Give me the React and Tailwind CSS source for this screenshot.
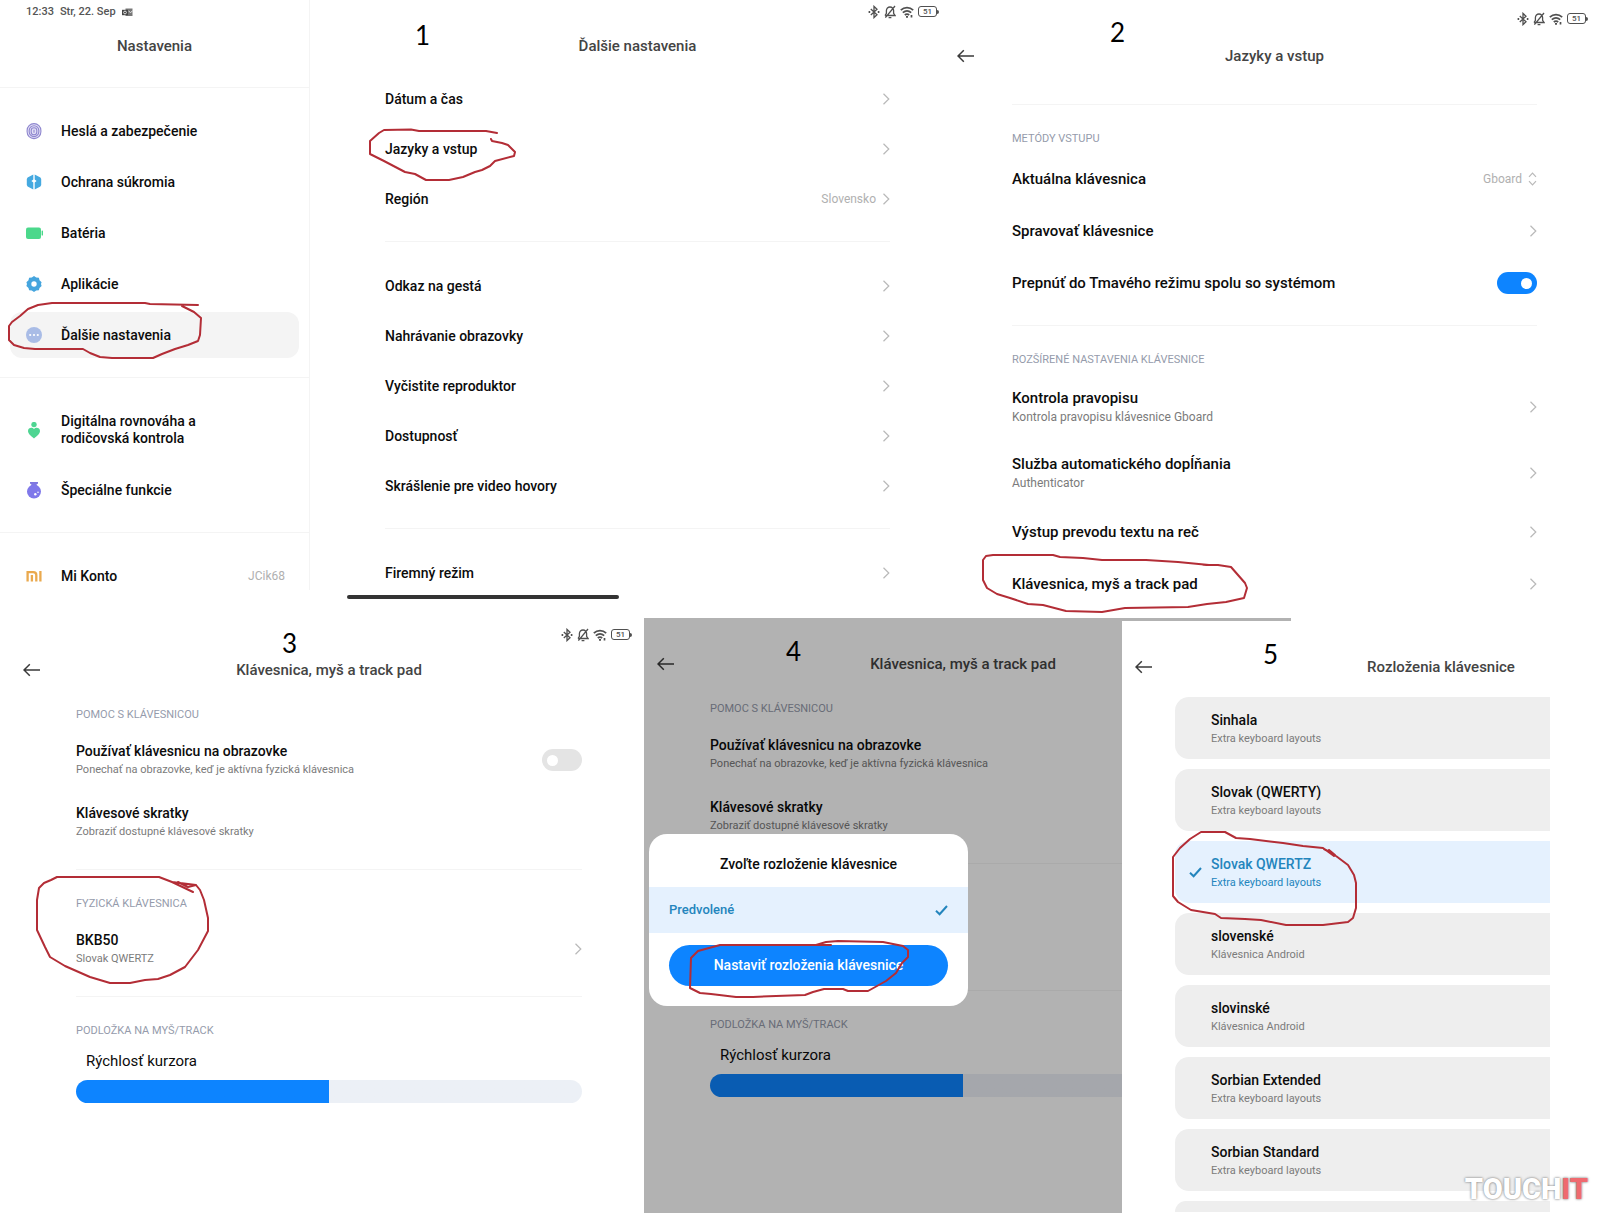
import { useId } from "react";

/* ---------- icons ---------- */

function Chevron() {
  return (
    <svg viewBox="0 0 8 12" className="h-3 w-2 shrink-0" fill="none" stroke="#b9b9b9" strokeWidth="1.2" aria-hidden="true">
      <path d="M1.5 0.8 6.8 6 1.5 11.2" />
    </svg>
  );
}

function UpDown() {
  return (
    <svg viewBox="0 0 9 14" className="h-3.5 w-[9px] shrink-0" fill="none" stroke="#b9b9b9" strokeWidth="1.2" aria-hidden="true">
      <path d="M1 4.8 4.5 1.2 8 4.8M1 9.2 4.5 12.8 8 9.2" />
    </svg>
  );
}

function Check() {
  return (
    <svg viewBox="0 0 13 11" className="h-[11px] w-[13px] shrink-0" fill="none" stroke="#2385bd" strokeWidth="2" aria-hidden="true">
      <path d="M1 5.8 4.6 9.2 12 1" />
    </svg>
  );
}

function Back() {
  return (
    <button type="button" aria-label="Späť" className="flex items-center">
      <svg viewBox="0 0 17 14" className="h-3.5 w-[17px]" fill="none" stroke="#3a3a3a" strokeWidth="1.5" aria-hidden="true">
        <path d="M17 7H1M6.8 1.2 1 7l5.8 5.8" />
      </svg>
    </button>
  );
}

function StatusIcons() {
  return (
    <div className="flex items-center gap-1 text-[#505050]">
      <svg viewBox="0 0 12 14" className="h-3.5 w-3" fill="none" stroke="currentColor" strokeWidth="1.3" aria-hidden="true">
        <path d="M2.8 4 9 9.8 6 12.6V1.4L9 4.2 2.8 10" />
        <path d="M0.6 7h1.6M9.8 7h1.6" strokeWidth="1.8" />
      </svg>
      <svg viewBox="0 0 12 14" className="h-3.5 w-3" fill="none" stroke="currentColor" strokeWidth="1.3" aria-hidden="true">
        <path d="M1 10.5h10L9.6 8.4V5.6C9.6 3.4 8 2 6 2S2.4 3.4 2.4 5.6v2.8L1 10.5M4.6 12.6h2.8M11 1 1.4 12.6" />
      </svg>
      <svg viewBox="0 0 14 12" className="h-3 w-3.5" fill="none" stroke="currentColor" strokeWidth="1.7" aria-hidden="true">
        <path d="M0.8 4.2C4.4 0.8 9.6 0.8 13.2 4.2M2.8 6.7c2.5-2.2 5.9-2.2 8.4 0M4.8 9c1.4-1.2 3-1.2 4.4 0" />
        <path d="M6 10.8h2M11.500 9v2.600" />
      </svg>
      <span className="flex items-center">
        <span className="flex h-[11px] w-[19px] items-center justify-center rounded-[3px] border border-current text-[8px] leading-none font-medium">51</span>
        <span className="h-1 w-0.5 rounded-r-sm bg-current" />
      </span>
    </div>
  );
}

const navIcons = {
  fingerprint: (
    <g fill="none" stroke="#8f87cf" strokeWidth="1.1">
      <rect x="1.1" y="0.6" width="13.8" height="15" rx="6.8" fill="#e3e0f6" />
      <rect x="3.2" y="2.8" width="9.6" height="10.8" rx="4.8" />
      <rect x="5.2" y="4.8" width="5.6" height="7" rx="2.8" />
      <path d="M8 6.8v3" />
    </g>
  ),
  privacy: (
    <g fill="#45a9e0">
      <path d="M7.3 0.4v5.2L5.4 7l1.9 1.4v7L1.6 12.4 0.8 11V5l.8-1.4z" />
      <path d="M8.7 0.4v5.2L10.6 7 8.7 8.4v7l5.7-3 .8-1.4V5l-.8-1.4z" />
    </g>
  ),
  battery: (
    <g fill="#4bd88b">
      <rect x="0" y="2.5" width="15" height="11.5" rx="2" />
      <rect x="15.600" y="5.5" width="1.4" height="5" rx="0.6" />
    </g>
  ),
  apps: (
    <g>
      <path
        d="M8 0l2.2 1.5 2.7.3.6 2.5L15.600 6.200 15 8l.6 2-2.100 2-.6 2.300-2.700.2L8 16l-2.200-1.500-2.700-.2L2.500 12 .4 10 1 8 .4 6.200l2.100-1.900.6-2.500 2.700-.3z"
        fill="#45a5de"
      />
      <circle cx="8" cy="8" r="2.700" fill="#fff" />
    </g>
  ),
  more: (
    <g>
      <circle cx="8" cy="8" r="8" fill="#a9bce6" />
      <circle cx="4.200" cy="8" r="1.100" fill="#fff" />
      <circle cx="8" cy="8" r="1.100" fill="#fff" />
      <circle cx="11.800" cy="8" r="1.100" fill="#fff" />
    </g>
  ),
  balance: (
    <g fill="#4ed592">
      <circle cx="8" cy="2.600" r="2.700" />
      <path d="M8 7c1.600-2 6-1.600 6 2 0 2.800-3.200 5.200-6 7.400C5.200 14.200 2 11.800 2 9c0-3.600 4.400-4 6-2z" />
    </g>
  ),
  special: (
    <g>
      <path d="M4 0h8v1.600l-1.600 1.200v1H5.600v-1L4 1.600z" fill="#7f78e0" />
      <circle cx="8" cy="9.600" r="7" fill="#7f78ea" />
      <circle cx="9.300" cy="12.200" r="1.200" fill="#fff" />
      <circle cx="12" cy="10.300" r="0.800" fill="#fff" />
    </g>
  ),
  mi: (
    <g fill="none" stroke="#eaa94e" strokeWidth="2.300">
      <path d="M1.600 13.500V4.200h5.600c1.900 0 3.100 1 3.100 2.900v6.400M5.900 7v6.500M14.400 3v10.500" />
    </g>
  ),
};

/* ---------- annotations ---------- */

function Scribble({ className, viewBox, d }) {
  return (
    <svg
      viewBox={viewBox}
      className={`pointer-events-none absolute z-10 max-w-none ${className}`}
      fill="none"
      stroke="#b32d36"
      strokeWidth="2"
      strokeLinejoin="round"
      strokeLinecap="round"
      aria-hidden="true"
    >
      <path d={d} />
    </svg>
  );
}

function Step({ n, className }) {
  return <span className={`absolute z-10 font-[Lato,sans-serif] text-[26px] leading-7 text-black ${className}`}>{n}</span>;
}

/* ---------- shared parts ---------- */

function Title({ children }) {
  return <h1 className="text-center text-[15px] leading-5 font-medium whitespace-nowrap text-[#444]">{children}</h1>;
}

function Group({ label, children, last }) {
  return (
    <section className={last ? "" : "border-b border-[#f4f4f4] pb-4"}>
      {label && <h2 className="pt-[26px] pb-1.5 text-[11px] leading-4 text-[#959bab]">{label}</h2>}
      {children}
    </section>
  );
}

function RowText({ title, sub, compact }) {
  return (
    <span className="flex flex-1 flex-col whitespace-nowrap">
      <span className={`leading-5 font-medium text-[#0c0c0c] ${compact ? "text-[14px]" : "text-[15px]"}`}>{title}</span>
      {sub && <span className={`leading-[18px] text-[#7b7b7b] ${compact ? "text-[11px]" : "text-[12px]"}`}>{sub}</span>}
    </span>
  );
}

function LinkRow({ title, sub, height, compact }) {
  return (
    <button type="button" className={`flex w-full items-center text-left ${height}`}>
      <RowText title={title} sub={sub} compact={compact} />
      <Chevron />
    </button>
  );
}

function ToggleRow({ title, sub, height, compact, on }) {
  return (
    <label className={`flex items-center ${height}`}>
      <RowText title={title} sub={sub} compact={compact} />
      <input
        type="checkbox"
        role="switch"
        defaultChecked={on}
        className="flex h-[22px] w-10 shrink-0 appearance-none items-center rounded-full bg-[#e4e4e4] px-[5px] before:size-[11px] before:rounded-full before:bg-white checked:justify-end checked:bg-[#0d84ff]"
      />
    </label>
  );
}

/* ---------- 1: settings ---------- */

const navGroups = [
  [
    { icon: "fingerprint", text: "Heslá a zabezpečenie" },
    { icon: "privacy", text: "Ochrana súkromia" },
    { icon: "battery", text: "Batéria" },
    { icon: "apps", text: "Aplikácie" },
    { icon: "more", text: "Ďalšie nastavenia", active: true },
  ],
  [
    { icon: "balance", text: "Digitálna rovnováha a rodičovská kontrola", tall: true },
    { icon: "special", text: "Špeciálne funkcie" },
  ],
  [{ icon: "mi", text: "Mi Konto", value: "JCik68" }],
];

function Sidebar() {
  return (
    <aside className="mb-7 flex flex-col border-r border-[#f4f4f4]">
      <div className="flex h-[23px] items-center gap-1.5 pt-px pl-[26px] text-[11px] font-medium text-[#555]">
        <span>12:33</span>
        <span>Str, 22. Sep</span>
        <svg viewBox="0 0 11 9" className="h-[9px] w-[11px]" aria-hidden="true">
          <path d="M3.500 0.500h7v7.500h-7z" fill="#777" />
          <path d="M0 1.800h6v5.400H0z" fill="#444" />
          <circle cx="3" cy="4.500" r="1.400" fill="none" stroke="#fff" strokeWidth="0.800" />
          <path d="M6.500 3l2 1.500 2-1.500" stroke="#fff" strokeWidth="0.800" fill="none" />
        </svg>
      </div>
      <div className="border-b border-[#f4f4f4] pt-[13px] pb-[31px]">
        <Title>Nastavenia</Title>
      </div>
      <nav>
        {navGroups.map((group, i) => (
          <ul
            key={i}
            className={`flex flex-col gap-[5px] px-2.5 pt-5 ${i < 2 ? "border-b border-[#f4f4f4] pb-[19px]" : "-mb-3"}`}
          >
            {group.map((item) => (
              <li key={item.text} className="relative">
                <a
                  href="#"
                  className={`flex items-center rounded-xl pr-3.5 pl-4 ${item.tall ? "h-16" : "h-[46px]"} ${item.active ? "bg-[#f4f4f4]" : ""}`}
                >
                  <svg viewBox="0 0 17 17" className="h-[17px] w-[17px] shrink-0" aria-hidden="true">
                    {navIcons[item.icon]}
                  </svg>
                  <span className="ml-[18px] max-w-[160px] flex-1 text-[14px] leading-[17px] font-medium text-[#0c0c0c]">
                    {item.text}
                  </span>
                  {item.value && <span className="ml-auto text-[12px] text-[#b0b0b0]">{item.value}</span>}
                </a>
                {item.active && (
                  <Scribble
                    className="top-[-10px] left-[-10px] h-[60px] w-[206px]"
                    viewBox="0 302 206 60"
                    d="M198 305 150 304 145 303H52L38 305 28 309 20 316 12 322 9 326V340L14 345 24 348 35 349H83L90 353 100 357 112 358H153L162 354 175 349 188 345 198 341 200 335 201 318 194 312 182 306"
                  />
                )}
              </li>
            ))}
          </ul>
        ))}
      </nav>
    </aside>
  );
}

const moreGroups = [
  ["Dátum a čas", "Jazyky a vstup", "Región"],
  ["Odkaz na gestá", "Nahrávanie obrazovky", "Vyčistite reproduktor", "Dostupnosť", "Skrášlenie pre video hovory"],
  ["Firemný režim"],
];

function MoreSettings() {
  return (
    <main className="relative">
      <Step n="1" className="top-[21px] left-[105px]" />
      <div className="flex h-[23px] items-center justify-end pr-1.5">
        <StatusIcons />
      </div>
      <div className="pr-[55px] pl-[75px]">
        <div className="pt-[13px] pb-[18px]">
          <Title>Ďalšie nastavenia</Title>
        </div>
        {moreGroups.map((group, i) => (
          <section key={i} className={`${i > 0 ? "pt-[19px]" : ""} ${i < 2 ? "border-b border-[#f4f4f4] pb-[17px]" : ""}`}>
            {group.map((text) => (
              <div key={text} className="relative">
                <button type="button" className="flex h-[50px] w-full items-center gap-1.5 text-left">
                  <span className="flex-1 text-[14px] leading-5 font-medium text-[#0c0c0c]">{text}</span>
                  {text === "Región" && <span className="text-[12px] text-[#b0b0b0]">Slovensko</span>}
                  <Chevron />
                </button>
                {text === "Jazyky a vstup" && (
                  <Scribble
                    className="top-px left-[-20px] h-[60px] w-[155px]"
                    viewBox="365 125 155 60"
                    d="M497 133 486 131H419L411 129.500 384 130 379 133 370 141V154L384 161 405 172 415 174 426 180H449L463 177 475 172 482 170 490 166 495 161 514 156 515 152 508 145 502 143 492 141 491 139"
                  />
                )}
              </div>
            ))}
          </section>
        ))}
      </div>
      <div className="-mt-[3px] ml-[37px] h-1 w-[272px] rounded-full bg-[#333]" />
    </main>
  );
}

/* ---------- 2: languages and input ---------- */

function Languages() {
  const id = useId();
  return (
    <main className="relative">
      <Step n="2" className="top-[18px] left-[165px]" />
      <div className="flex h-[37px] items-center justify-end pr-3">
        <StatusIcons />
      </div>
      <header className="grid h-[37px] grid-cols-[67px_1fr_63px] items-center">
        <div className="pl-3">
          <Back />
        </div>
        <Title>Jazyky a vstup</Title>
      </header>
      <div className="mt-[30px] mr-[63px] ml-[67px] border-t border-[#f4f4f4]">
        <Group label="METÓDY VSTUPU">
          <div className="flex h-[52px] items-center">
            <label htmlFor={id} className="flex-1 text-[15px] leading-5 font-medium text-[#0c0c0c]">
              Aktuálna klávesnica
            </label>
            <select id={id} className="mr-1.5 appearance-none bg-transparent text-right text-[12px] text-[#b0b0b0]">
              <option>Gboard</option>
            </select>
            <UpDown />
          </div>
          <LinkRow title="Spravovať klávesnice" height="h-[52px]" />
          <ToggleRow title="Prepnúť do Tmavého režimu spolu so systémom" height="h-[52px]" on />
        </Group>
        <Group label="ROZŠÍRENÉ NASTAVENIA KLÁVESNICE" last>
          <LinkRow title="Kontrola pravopisu" sub="Kontrola pravopisu klávesnice Gboard" height="h-[66px]" />
          <LinkRow title="Služba automatického dopĺňania" sub="Authenticator" height="h-[66px]" />
          <LinkRow title="Výstup prevodu textu na reč" height="h-[52px]" />
          <div className="relative">
            <LinkRow title="Klávesnica, myš a track pad" height="h-[52px]" />
            <Scribble
              className="top-[-8px] left-[-32px] h-[66px] w-[270px]"
              viewBox="980 550 270 66"
              d="M1209 565 1178 562 1146 560H1102L1083 558 1060 557 1053 555H993L986 556 983 560V580L987 588 997 594 1010 598 1028 604 1043 605 1066 611 1102 612 1125 608 1188 607 1207 604 1226 602 1244 598 1247 588 1245 583 1231 567 1218 565 1203 565"
            />
          </div>
        </Group>
      </div>
    </main>
  );
}

/* ---------- 3 and 4: keyboard, mouse and track pad ---------- */

function KeyboardSettings({ marked }) {
  const id = useId();
  return (
    <>
      <header className="flex h-[38px] items-center justify-center">
        <Title>Klávesnica, myš a track pad</Title>
      </header>
      <div className="-mt-2">
        <Group label="POMOC S KLÁVESNICOU">
          <ToggleRow
            title="Používať klávesnicu na obrazovke"
            sub="Ponechať na obrazovke, keď je aktívna fyzická klávesnica"
            height="h-[62px]"
            compact
          />
          <button type="button" className="flex h-[62px] w-full items-center text-left">
            <RowText title="Klávesové skratky" sub="Zobraziť dostupné klávesové skratky" compact />
          </button>
        </Group>
        <Group label="FYZICKÁ KLÁVESNICA">
          <div className="relative">
            <LinkRow title="BKB50" sub="Slovak QWERTZ" height="h-[62px]" compact />
            {marked && (
              <Scribble
                className="top-[-46px] left-[-44px] h-[116px] w-[180px]"
                viewBox="32 872 180 116"
                d="M193 892 172 882M178 882 188 887 196 885M196 885 172 882 159 877H57L51 880 44 883 39 888 37 900V930L45 947 50 957 65 966 90 977 110 983H130L145 980 158 979 170 975 185 967 198 950 208 931V918L204 900 200 890 196 885"
              />
            )}
          </div>
        </Group>
        <Group label="PODLOŽKA NA MYŠ/TRACK" last>
          <label htmlFor={id} className="flex h-8 items-center pl-2.5 text-[15px] text-[#0c0c0c]">
            Rýchlosť kurzora
          </label>
          <input
            id={id}
            type="range"
            defaultValue="50"
            className="mt-[3px] block h-[23px] w-full appearance-none rounded-full bg-linear-to-r from-[#0d84ff] from-50% to-[#ecf0f6] to-50% [&::-webkit-slider-thumb]:opacity-0"
          />
        </Group>
      </div>
    </>
  );
}

function KeyboardPanel() {
  return (
    <main className="relative">
      <Step n="3" className="top-[11px] left-[282px]" />
      <div className="flex h-[33px] items-center justify-end pr-3">
        <StatusIcons />
      </div>
      <div className="flex">
        <div className="flex h-[38px] w-[76px] shrink-0 items-center pl-[23px]">
          <Back />
        </div>
        <div className="mr-[62px] flex-1">
          <KeyboardSettings marked />
        </div>
      </div>
    </main>
  );
}

function LayoutDialogPanel() {
  return (
    <main className="relative overflow-hidden">
      <div className="flex pt-[27px]">
        <div className="flex h-[38px] w-[66px] shrink-0 items-center pl-[13px]">
          <Back />
        </div>
        <div className="w-[506px] shrink-0">
          <KeyboardSettings />
        </div>
      </div>
      <div className="absolute inset-0 bg-black/30" />
      <Step n="4" className="top-[19px] left-[142px]" />
      <div role="dialog" aria-labelledby="layout-title" className="absolute top-[216px] left-[5px] w-[319px] rounded-[18px] bg-white pb-5">
        <h2 id="layout-title" className="flex h-[53px] items-center justify-center pt-2 text-[14px] font-medium text-[#0c0c0c]">
          Zvoľte rozloženie klávesnice
        </h2>
        <button type="button" className="flex h-[46px] w-full items-center justify-between bg-[#e5f1fe] px-5 text-[13px] font-medium text-[#2385bd]">
          Predvolené
          <Check />
        </button>
        <div className="relative mx-5 mt-3">
          <button type="button" className="h-[41px] w-full rounded-full bg-[#0d84ff] text-[14px] font-medium text-white">
            Nastaviť rozloženia klávesnice
          </button>
          <Scribble
            className="-top-2 left-4 h-16 w-[228px]"
            viewBox="685 937 228 64"
            d="M831 945 720 945 698 951 691 958 690 988 700 993 711 994 736 997H753L776 996 805 995 813 992 824 989H843L848 991H868L886 981 896 973 902 963 908 957V950L903 946 883 942 838 941 826 942 816 945"
          />
        </div>
      </div>
    </main>
  );
}

/* ---------- 5: keyboard layouts ---------- */

const layouts = [
  ["Sinhala", "Extra keyboard layouts"],
  ["Slovak (QWERTY)", "Extra keyboard layouts"],
  ["Slovak QWERTZ", "Extra keyboard layouts", true],
  ["slovenské", "Klávesnica Android"],
  ["slovinské", "Klávesnica Android"],
  ["Sorbian Extended", "Extra keyboard layouts"],
  ["Sorbian Standard", "Extra keyboard layouts"],
];

function LayoutsPanel() {
  return (
    <main className="relative">
      <div className="h-[3px] w-[169px] bg-[#b2b2b2]" />
      <Step n="5" className="top-[22px] left-[141px]" />
      <header className="mt-[27px] flex h-[38px] items-center pl-[13px]">
        <Back />
        <div className="ml-[130px] flex-1">
          <Title>Rozloženia klávesnice</Title>
        </div>
      </header>
      <ul className="mt-[11px] mr-[50px] ml-[53px] flex flex-col gap-2.5">
        {layouts.map(([name, source, selected]) => (
          <li key={name} className="relative">
            <button
              type="button"
              className={`flex h-[62px] w-full items-center rounded-l-[14px] text-left ${selected ? "bg-[#e5f1fe] text-[#2385bd]" : "bg-[#eee] text-[#0c0c0c]"}`}
            >
              <span className="flex w-9 shrink-0 justify-center pl-1">{selected && <Check />}</span>
              <span className="flex flex-col pt-0.5">
                <span className="text-[14px] leading-5 font-medium">{name}</span>
                <span className={`text-[11px] leading-[18px] ${selected ? "" : "text-[#7b7b7b]"}`}>{source}</span>
              </span>
            </button>
            {selected && (
              <Scribble
                className="top-[-13px] left-[-7px] h-[102px] w-[192px]"
                viewBox="1168 828 192 102"
                d="M1324 849 1335 855 1329 850 1334 856 1323 848 1303 846 1283 843 1250 839 1236 838 1225 832H1201L1190 839 1180 848 1173 857V896L1178 902 1191 910 1215 914 1221 918 1245 919 1261 920 1286 925H1323L1348 922 1353 918 1356 908V883L1354 875 1348 865 1336 856"
              />
            )}
          </li>
        ))}
        <li className="h-[11px] rounded-tl-[14px] bg-[#eee]" />
      </ul>
      <p className="absolute right-3 bottom-2 text-[29px] leading-8 font-black text-white [text-shadow:0_0_2px_#888,0_0_3px_#aaa]">
        TOUCH<span className="text-[#ef6a6f]">IT</span>
      </p>
    </main>
  );
}

export default function App() {
  return (
    <div className="flex min-h-screen flex-col overflow-x-hidden bg-white font-[Roboto,sans-serif]">
      <div className="grid min-h-[618px] grid-cols-[310fr_635fr_655fr]">
        <Sidebar />
        <MoreSettings />
        <Languages />
      </div>
      <div className="grid flex-1 grid-cols-[644fr_478fr_478fr]">
        <KeyboardPanel />
        <LayoutDialogPanel />
        <LayoutsPanel />
      </div>
    </div>
  );
}
